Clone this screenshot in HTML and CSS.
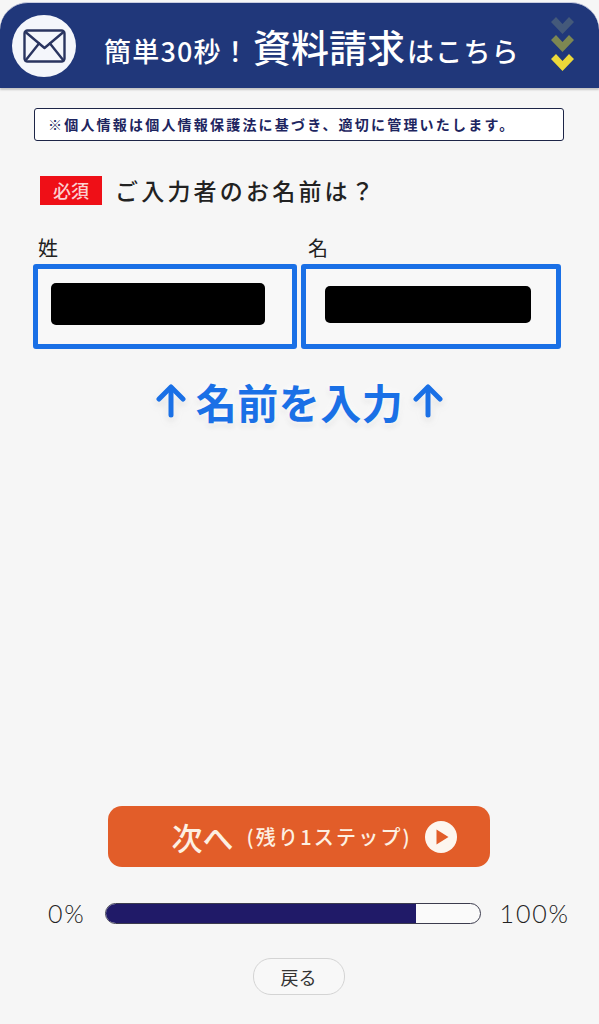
FILE: index.html
```html
<!DOCTYPE html>
<html lang="ja">
<head>
  <meta charset="UTF-8" />
  <meta name="viewport" content="width=device-width, initial-scale=1.0"/>
  <title>資料請求</title>
  <link rel="stylesheet" href="styles.css">
</head>
<body>
  <header class="banner">
    <div class="mail-icon">
      <svg width="43" height="34" viewBox="0 0 43 34" fill="none" stroke="#2a3560" stroke-width="2.4" stroke-linejoin="round" stroke-linecap="round">
        <rect x="1.5" y="1.5" width="40" height="31" rx="3"/>
        <path d="M2.5 3 L21.5 19 L40.5 3"/>
        <path d="M2.5 31.5 L16 14.5"/>
        <path d="M40.5 31.5 L27 14.5"/>
      </svg>
    </div>
    <p class="banner-text">簡単30秒！<span class="banner-big">資料請求</span>はこちら</p>
    <svg class="chevrons" width="23" height="54" viewBox="0 0 23 54">
      <polygon points="0,5 5,0 11.5,7 18,0 23,5 11.5,17" fill="#44597a"/>
      <polygon points="0,23 5,18 11.5,25 18,18 23,23 11.5,35" fill="#7d8752"/>
      <polygon points="0,42 5,37 11.5,44 18,37 23,42 11.5,54" fill="#ecd93a"/>
    </svg>
  </header>

  <main class="content">
    <p class="notice">※個人情報は個人情報保護法に基づき、適切に管理いたします。</p>

    <div class="question">
      <span class="required">必須</span>
      <span class="question-text">ご入力者のお名前は？</span>
    </div>

    <div class="name-fields">
      <div class="name-field">
        <label class="name-label">姓</label>
        <div class="name-box"><div class="mask mask-sei"></div></div>
      </div>
      <div class="name-field">
        <label class="name-label">名</label>
        <div class="name-box"><div class="mask mask-mei"></div></div>
      </div>
    </div>

    <div class="hint">
      <svg width="32" height="34" viewBox="0 0 32 34" fill="none" stroke="#1a70e6" stroke-width="5" stroke-linecap="round" stroke-linejoin="round">
        <path d="M16 31 V4"/>
        <path d="M4 15 L16 3 L28 15"/>
      </svg>
      <span>名前を入力</span>
      <svg width="32" height="34" viewBox="0 0 32 34" fill="none" stroke="#1a70e6" stroke-width="5" stroke-linecap="round" stroke-linejoin="round">
        <path d="M16 31 V4"/>
        <path d="M4 15 L16 3 L28 15"/>
      </svg>
    </div>

    <div class="bottom">
      <button class="next-btn">
        <span class="next-big">次へ</span>
        <span class="next-small">(残り1ステップ)</span>
        <svg width="32" height="32" viewBox="0 0 32 32">
          <circle cx="16" cy="16" r="16" fill="#fdf6ef"/>
          <path d="M11.5 8.5 L23.5 16 L11.5 23.5 Z" fill="#e25d29"/>
        </svg>
      </button>

      <div class="progress">
        <span>0%</span>
        <div class="progress-track"><div class="progress-fill" style="width: 83%"></div></div>
        <span>100%</span>
      </div>

      <button class="back-btn">戻る</button>
    </div>
  </main>
</body>
</html>
```

FILE: styles.css
```css
* {
  box-sizing: border-box;
}
html, body {
  height: 100%;
}
body {
  margin: 0;
  background-color: #f6f6f6;
  font-family: "Noto Sans CJK JP", "Noto Sans", sans-serif;
  color: #222;
  display: flex;
  flex-direction: column;
}
p {
  margin: 0;
}
.banner {
  height: 86px;
  margin-top: 2px;
  flex-shrink: 0;
  background-color: #20377a;
  border-radius: 28px 28px 0 0;
  border-top: 1px solid #c9cde0;
  box-shadow: 0 2px 2px rgba(0, 0, 0, 0.2);
  display: flex;
  align-items: center;
  padding: 0 25px 0 12px;
}
.mail-icon {
  width: 64px;
  height: 62px;
  border-radius: 50%;
  background-color: #f4f6fb;
  display: flex;
  align-items: center;
  justify-content: center;
  flex-shrink: 0;
}
.banner-text {
  flex: 1;
  color: #fff;
  font-size: 27px;
  font-weight: 500;
  letter-spacing: 1.2px;
  white-space: nowrap;
  padding-left: 28px;
}
.banner-big {
  font-size: 38px;
  letter-spacing: 0;
  margin: 0 2px 0 3px;
}
.chevrons {
  flex-shrink: 0;
  margin-top: -4px;
}
.content {
  flex: 1;
  display: flex;
  flex-direction: column;
  padding: 20px 32px 29px;
}
.notice {
  margin: 0 3px 0 2px;
  height: 33px;
  flex-shrink: 0;
  border: 1px solid #1d2547;
  border-radius: 3px;
  background-color: #fff;
  color: #1d2560;
  font-size: 14px;
  font-weight: 700;
  line-height: 31px;
  padding-left: 13px;
  letter-spacing: 2.2px;
  white-space: nowrap;
  overflow: hidden;
}
.question {
  display: flex;
  align-items: center;
  gap: 13px;
  margin: 32px 0 0 8px;
}
.required {
  width: 62px;
  height: 29px;
  background-color: #ef0f17;
  color: #fbd0d0;
  font-size: 18px;
  font-weight: 500;
  text-align: center;
  line-height: 29px;
}
.question-text {
  font-size: 23px;
  font-weight: 500;
  letter-spacing: 3.2px;
}
.name-fields {
  display: flex;
  gap: 4px;
  margin-top: 27px;
  margin-left: 1px;
}
.name-field {
  display: flex;
  flex-direction: column;
}
.name-field:first-child {
  width: 264px;
}
.name-field:last-child {
  width: 260px;
}
.name-label {
  font-size: 20px;
  line-height: 28px;
  padding-left: 5px;
  margin-bottom: 2px;
}
.name-field:last-child .name-label {
  padding-left: 7px;
}
.name-box {
  height: 85px;
  border: 5px solid #1a70e6;
  border-radius: 3px;
  background-color: #f8f8f8;
  padding: 14px 27px 0 13px;
}
.name-field:last-child .name-box {
  padding: 17px 25px 0 19px;
}
.mask {
  background-color: #000;
  border-radius: 5px;
}
.mask-sei {
  height: 42px;
}
.mask-mei {
  height: 37px;
}
.hint {
  display: flex;
  justify-content: center;
  align-items: center;
  gap: 9px;
  margin-top: 22px;
  color: #1a70e6;
  font-size: 41px;
  font-weight: 700;
  letter-spacing: 0.5px;
  line-height: 60px;
  text-shadow: 0 0 5px #fff, 0 0 8px #fff, 0 3px 6px rgba(0, 0, 0, 0.12);
}
.hint svg {
  filter: drop-shadow(0 0 3px #fff) drop-shadow(0 3px 3px rgba(0, 0, 0, 0.1));
}
.bottom {
  margin-top: auto;
  display: flex;
  flex-direction: column;
  align-items: center;
}
.next-btn {
  width: 382px;
  height: 61px;
  margin-left: -2px;
  border: none;
  border-radius: 14px;
  background-color: #e25d29;
  color: #fdf0e2;
  font-family: inherit;
  display: flex;
  align-items: center;
  padding: 0 33px 0 64px;
}
.next-big {
  font-size: 31px;
  font-weight: 500;
}
.next-small {
  flex: 1;
  font-size: 20px;
  font-weight: 500;
  letter-spacing: 2.2px;
  margin-left: 13px;
  text-align: left;
  white-space: nowrap;
}
.progress {
  align-self: flex-start;
  display: flex;
  align-items: center;
  gap: 19px;
  margin: 31px 0 0 16px;
  font-family: "Lato", "Noto Sans", sans-serif;
  font-size: 25px;
  font-weight: 300;
  line-height: 30px;
  color: #222;
  letter-spacing: 1.8px;
}
.progress-track {
  width: 376px;
  height: 21px;
  border: 1px solid #3c3c4e;
  border-radius: 11px;
  background-color: #fafafa;
  overflow: hidden;
}
.progress-fill {
  height: 100%;
  background-color: #201a68;
}
.back-btn {
  width: 92px;
  height: 37px;
  margin-top: 30px;
  margin-left: -2px;
  border: 1px solid #d4d4d4;
  border-radius: 18px;
  background-color: #f8f8f8;
  color: #333;
  font-family: inherit;
  font-size: 18px;
}
```
